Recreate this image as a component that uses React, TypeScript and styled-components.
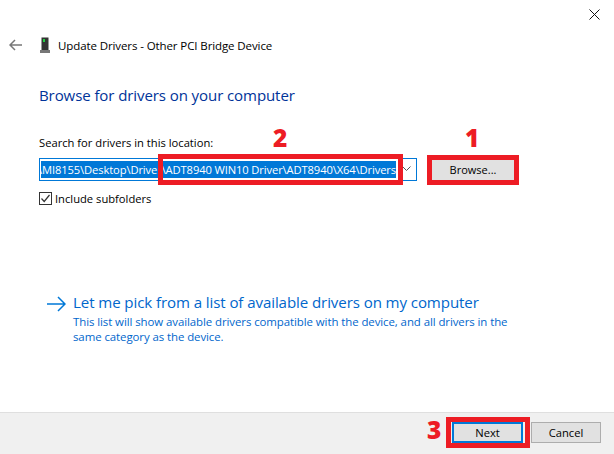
import styled, { createGlobalStyle } from "styled-components";

const GlobalStyle = createGlobalStyle`
    html, body {
        margin: 0;
        padding: 0;
        background: #fff;
    }
`;

const Window = styled.div`
    position: relative;
    width: 614px;
    height: 454px;
    display: flex;
    flex-direction: column;
    overflow: hidden;
    background: #fff;
    font-family: "Open Sans", "Noto Sans", sans-serif;
    font-size: 11.2px;
    color: #000;
`;

const CloseIcon = styled.svg`
    position: absolute;
    top: 9px;
    right: 14px;
    width: 11px;
    height: 11px;
`;

const Header = styled.div`
    display: flex;
    align-items: center;
    height: 20px;
    margin-top: 35px;
    padding-left: 9px;
`;

const BackIcon = styled.svg`
    width: 13px;
    height: 12px;
    margin-right: 18px;
`;

const DeviceIcon = styled.svg`
    width: 10px;
    height: 16px;
    margin-right: 8px;
`;

const HeaderTitle = styled.span`
    font-size: 11.5px;
    letter-spacing: -0.1px;
`;

const Content = styled.div`
    flex: 1;
    display: flex;
    flex-direction: column;
    padding: 0 0 0 39px;
`;

const Heading = styled.h1`
    margin: 30px 0 0;
    font-size: 15.05px;
    line-height: 20px;
    font-weight: 400;
    color: #003399;
    letter-spacing: -0.1px;
`;

const FieldLabel = styled.div`
    margin-top: 30px;
    height: 16px;
    line-height: 16px;
`;

const FieldRow = styled.div`
    display: flex;
    align-items: center;
    margin-top: 6px;
    height: 24px;
`;

const PathBox = styled.div`
    width: 378px;
    height: 23px;
    box-sizing: border-box;
    display: flex;
    align-items: center;
    border: 1px solid #0078d7;
    padding-left: 1px;
`;

const PathText = styled.div`
    width: 355px;
    height: 17px;
    line-height: 17px;
    overflow: hidden;
    white-space: nowrap;
    direction: rtl;
    background: #0078d7;
    color: #fff;
    font-size: 11.2px;
    letter-spacing: -0.12px;
`;

const ComboArrow = styled.svg`
    width: 9px;
    height: 6px;
    margin-left: 6px;
`;

const Button = styled.button<{ $default?: boolean }>`
    width: ${(p) => (p.$default ? "71px" : "70px")};
    height: 21px;
    box-sizing: border-box;
    padding: 0;
    background: #e1e1e1;
    border: ${(p) => (p.$default ? "2px solid #0078d7" : "1px solid #adadad")};
    font: inherit;
    color: #000;
`;

const BrowseButton = styled(Button)`
    width: 82px;
    margin-left: 15px;
    border: 0;
    font-size: 11px;
`;

const CheckRow = styled.label`
    display: flex;
    align-items: center;
    gap: 3px;
    margin-top: 10px;
    height: 14px;
`;

const CheckBox = styled.span`
    width: 13px;
    height: 13px;
    box-sizing: border-box;
    border: 1px solid #333;
    display: flex;
    align-items: center;
    justify-content: center;
`;

const LinkRow = styled.div`
    display: flex;
    margin-top: 87px;
    margin-left: 7px;
`;

const LinkArrow = styled.svg`
    width: 20px;
    height: 16px;
    margin-top: 4px;
    margin-right: 7px;
    flex: none;
`;

const LinkBody = styled.div`
    width: 445px;
    color: #0066cc;
`;

const LinkTitle = styled.div`
    font-size: 15.1px;
    line-height: 21px;
    letter-spacing: -0.1px;
    white-space: nowrap;
    color: #0066cc;
`;

const LinkNote = styled.div`
    font-size: 11.45px;
    line-height: 15px;
    margin-top: 1px;
    letter-spacing: -0.08px;
`;

const Footer = styled.div`
    height: 42px;
    box-sizing: border-box;
    display: flex;
    justify-content: flex-end;
    align-items: flex-start;
    gap: 8px;
    padding: 9px 13px 0 0;
    background: #f0f0f0;
    border-top: 1px solid #dfdfdf;
`;

/* red markers drawn on top of the dialog */
const Marker = styled.div<{ $x: number; $y: number; $w: number; $h: number }>`
    position: absolute;
    left: ${(p) => p.$x}px;
    top: ${(p) => p.$y}px;
    width: ${(p) => p.$w}px;
    height: ${(p) => p.$h}px;
    box-sizing: border-box;
    border: 5px solid #ed1c24;
`;

const StepNumber = styled.div<{ $x: number; $y: number }>`
    position: absolute;
    left: ${(p) => p.$x}px;
    top: ${(p) => p.$y}px;
    font-family: "Open Sans", sans-serif;
    font-size: 24.5px;
    line-height: 28px;
    font-weight: 800;
    color: #ed1c24;
`;

export default function App() {
    return (
        <Window>
            <GlobalStyle />
            <CloseIcon viewBox="0 0 11 11">
                <path d="M0.5 0.5L10.5 10.5M10.5 0.5L0.5 10.5" stroke="#111" strokeWidth="1" fill="none" />
            </CloseIcon>

            <Header>
                <BackIcon viewBox="0 0 13 12">
                    <path d="M6 1L1 6L6 11M1 6H13" stroke="#777" strokeWidth="1.5" fill="none" />
                </BackIcon>
                <DeviceIcon viewBox="0 0 10 16">
                    <rect x="1.5" y="0.5" width="7" height="13" fill="#333" />
                    <rect x="3" y="2" width="2" height="3" fill="#22d040" />
                    <rect x="0" y="13" width="10" height="3" fill="#777" />
                </DeviceIcon>
                <HeaderTitle>Update Drivers - Other PCI Bridge Device</HeaderTitle>
            </Header>

            <Content>
                <Heading>Browse for drivers on your computer</Heading>
                <FieldLabel>Search for drivers in this location:</FieldLabel>
                <FieldRow>
                    <PathBox>
                        <PathText>
                            <bdi>C:\Users\MI8155\Desktop\Driver\ADT8940 WIN10 Driver\ADT8940\X64\Drivers</bdi>
                        </PathText>
                        <ComboArrow viewBox="0 0 9 6">
                            <path d="M0.5 0.5L4.5 4.5L8.5 0.5" stroke="#555" strokeWidth="1" fill="none" />
                        </ComboArrow>
                    </PathBox>
                    <BrowseButton>Browse...</BrowseButton>
                </FieldRow>
                <CheckRow>
                    <CheckBox>
                        <svg width="11" height="11" viewBox="0 0 11 11">
                            <path d="M1.5 5.5L4.2 8.5L9.5 2" stroke="#333" strokeWidth="1.2" fill="none" />
                        </svg>
                    </CheckBox>
                    Include subfolders
                </CheckRow>

                <LinkRow>
                    <LinkArrow viewBox="0 0 20 16">
                        <path d="M1 8H19M12 1L19 8L12 15" stroke="#0078d7" strokeWidth="1.5" fill="none" />
                    </LinkArrow>
                    <LinkBody>
                        <LinkTitle>Let me pick from a list of available drivers on my computer</LinkTitle>
                        <LinkNote>
                            This list will show available drivers compatible with the device, and all drivers in the
                            same category as the device.
                        </LinkNote>
                    </LinkBody>
                </LinkRow>
            </Content>

            <Footer>
                <Button $default>Next</Button>
                <Button>Cancel</Button>
            </Footer>

            <Marker $x={158} $y={154} $w={245} $h={31} />
            <Marker $x={427} $y={155} $w={92} $h={30} />
            <Marker $x={446} $y={417} $w={84} $h={31} />
            <StepNumber $x={273} $y={124}>2</StepNumber>
            <StepNumber $x={465} $y={124}>1</StepNumber>
            <StepNumber $x={427} $y={416}>3</StepNumber>
        </Window>
    );
}
